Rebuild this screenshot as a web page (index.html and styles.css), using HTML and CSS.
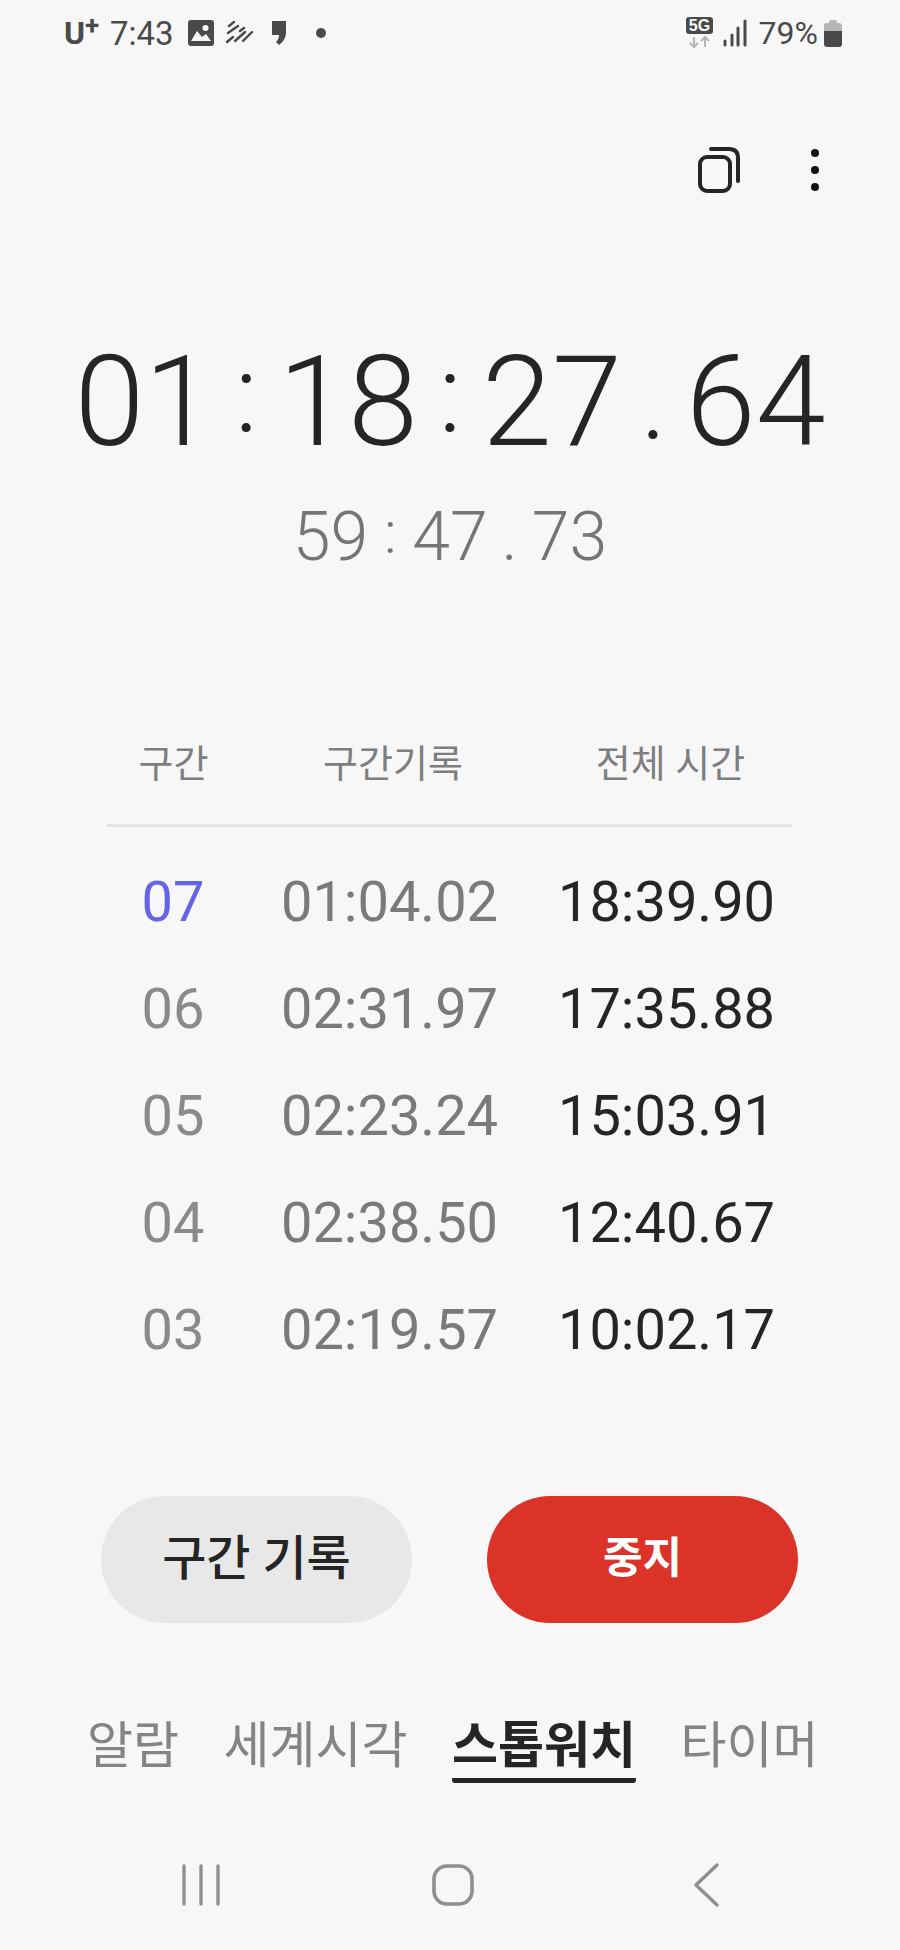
FILE: index.html
```html
<!DOCTYPE html>
<html lang="ko">
<head>
<meta charset="UTF-8">
<title>스톱워치</title>
<link rel="stylesheet" href="styles.css">
</head>
<body>
<div class="status">
	<div class="status-left">
		<span class="carrier">U<sup>+</sup></span>
		<span class="clock">7:43</span>
		<svg class="ico-img" width="26" height="26" viewBox="0 0 26 26"><rect width="26" height="26" rx="3" fill="#4a4a4a"/><circle cx="17.5" cy="8" r="3" fill="#f7f7f7"/><path d="M3 21 L9 11 L14 17 L18 14 L23 21 Z" fill="#f7f7f7"/></svg>
		<svg class="ico-dash" width="28" height="24" viewBox="0 0 28 24"><path d="M3 5 L8 1 M2 12 L12 5 M14 10 L18 7 M1 21 L7 16 M9 20 L19 11 M17 20 L26 11" stroke="#4a4a4a" stroke-width="2.4" stroke-linecap="round" fill="none"/></svg>
		<svg class="ico-comma" width="16" height="26" viewBox="0 0 16 26"><path d="M1 1 H15 V13 C15 18 11 23 8 25 L5 22 C7 20 8 18 8 15 H1 Z" fill="#4a4a4a"/></svg>
		<span class="dot"></span>
	</div>
	<div class="status-right">
		<svg width="28" height="32" viewBox="0 0 28 32"><rect width="27" height="17" rx="3" fill="#4a4a4a"/><text x="13.5" y="14" class="ico-5g">5G</text><path d="M8 20 V30 M4 26 L8 30 L12 26 M19 30 V20 M15 24 L19 20 L23 24" stroke="#b5b5b5" stroke-width="2" fill="none"/></svg>
		<svg class="ico-signal" width="24" height="28" viewBox="0 0 24 28"><path d="M2 22 V26 M9 16 V26 M15 9 V26 M22 2 V26" stroke="#4a4a4a" stroke-width="3" stroke-linecap="round"/></svg>
		<span class="pct">79%</span>
		<svg width="18" height="28" viewBox="0 0 18 28"><path d="M5 3 Q5 1 7 1 H11 Q13 1 13 3 V4 H15 Q18 4 18 7 V12 H0 V7 Q0 4 3 4 H5 Z" fill="#b5b5b5"/><path d="M0 12 H18 V25 Q18 28 15 28 H3 Q0 28 0 25 Z" fill="#4a4a4a"/></svg>
	</div>
</div>

<div class="toolbar">
	<svg width="42" height="46" viewBox="0 0 42 46"><rect x="2" y="10" width="30" height="34" rx="7" fill="none" stroke="#252525" stroke-width="4"/><path d="M13 2 H31 Q40 2 40 11 V34" fill="none" stroke="#252525" stroke-width="4" stroke-linecap="round"/></svg>
	<div class="more"><i></i><i></i><i></i></div>
</div>

<div class="timer">
	<span>01</span><span class="sep colon">:</span><span>18</span><span class="sep colon">:</span><span>27</span><span class="sep">.</span><span>64</span>
</div>
<div class="subtimer">
	<span>59</span><span class="sep colon">:</span><span>47</span><span class="sep">.</span><span>73</span>
</div>

<div class="laps">
	<div class="lap-head">
		<div>구간</div><div>구간기록</div><div>전체 시간</div>
	</div>
	<div class="lap-row current"><div class="n">07</div><div class="d">01:04.02</div><div class="t">18:39.90</div></div>
	<div class="lap-row"><div class="n">06</div><div class="d">02:31.97</div><div class="t">17:35.88</div></div>
	<div class="lap-row"><div class="n">05</div><div class="d">02:23.24</div><div class="t">15:03.91</div></div>
	<div class="lap-row"><div class="n">04</div><div class="d">02:38.50</div><div class="t">12:40.67</div></div>
	<div class="lap-row"><div class="n">03</div><div class="d">02:19.57</div><div class="t">10:02.17</div></div>
</div>

<div class="buttons">
	<div class="btn btn-lap">구간 기록</div>
	<div class="btn btn-stop">중지</div>
</div>

<div class="tabs">
	<div class="tab">알람</div>
	<div class="tab">세계시각</div>
	<div class="tab active">스톱워치</div>
	<div class="tab">타이머</div>
</div>

<div class="navbar">
	<svg width="42" height="42" viewBox="0 0 42 42"><path d="M4 2 V40 M21 2 V40 M38 2 V40" stroke="#8f8f8f" stroke-width="3.4" stroke-linecap="round"/></svg>
	<svg class="nav-home" width="42" height="42" viewBox="0 0 42 42"><rect x="2" y="2" width="38" height="38" rx="13" fill="none" stroke="#8f8f8f" stroke-width="3.6"/></svg>
	<svg width="26" height="44" viewBox="0 0 26 44"><path d="M23 2 L2 22 L23 42" fill="none" stroke="#8f8f8f" stroke-width="3.4" stroke-linecap="round" stroke-linejoin="round"/></svg>
</div>
</body>
</html>
```

FILE: styles.css
```css
html, body
{	margin:0;
	padding:0;
	background:#f7f7f7;
	font-family:Roboto, "Noto Sans CJK KR", sans-serif;
}
body
{	width:900px;
	height:1950px;
	overflow:hidden;
}

/* status bar */
.status
{	height:66px;
	display:flex;
	justify-content:space-between;
	align-items:center;
	padding:0 58px 0 64px;
	color:#4a4a4a;
}
.status-left, .status-right
{	display:flex;
	align-items:center;
}
.carrier
{	font-size:32px;
	font-weight:700;
	line-height:34px;
	width:37px;
}
.carrier sup
{	font-size:26px;
	line-height:0;
	vertical-align:10px;
}
.clock
{	font-size:33px;
	margin-left:9px;
	width:78px;
}
.ico-dash
{	margin-left:12px;
}
.ico-comma
{	margin-left:17px;
}
.dot
{	width:10px;
	height:10px;
	border-radius:50%;
	background:#4a4a4a;
	margin-left:29px;
}
.ico-5g
{	font-family:"Liberation Sans", sans-serif;
	font-size:16px;
	font-weight:700;
	fill:#f7f7f7;
	text-anchor:middle;
}
.ico-signal
{	margin-left:9px;
}
.pct
{	font-size:32px;
	margin-left:12px;
	margin-right:6px;
}

/* toolbar */
.toolbar
{	height:46px;
	margin-top:81px;
	padding:0 81px 0 698px;
	display:flex;
	justify-content:space-between;
	align-items:center;
}
.more
{	display:flex;
	flex-direction:column;
	gap:9px;
}
.more i
{	display:block;
	width:8px;
	height:8px;
	border-radius:50%;
	background:#111;
}

/* timer */
.timer
{	margin-top:139px;
	height:140px;
	line-height:140px;
	display:flex;
	justify-content:center;
	font-size:126px;
	font-weight:300;
	color:#252525;
}
.timer .sep
{	width:64px;
	text-align:center;
	font-size:110px;
}
.timer .colon
{	line-height:125px;
}
.subtimer
{	margin-top:30px;
	height:70px;
	line-height:70px;
	display:flex;
	justify-content:center;
	font-size:68px;
	font-weight:300;
	color:#757575;
}
.subtimer .sep
{	width:44px;
	text-align:center;
}
.subtimer .colon
{	font-size:60px;
	line-height:62px;
}

/* lap table */
.laps
{	margin:162px 108px 0 107px;
}
.lap-head
{	display:grid;
	grid-template-columns:133px 306px 249px;
	height:90px;
	line-height:60px;
	font-size:38px;
	text-align:center;
	color:#7e7e7e;
	border-bottom:3px solid #e3e3e3;
	margin-bottom:22px;
}
.lap-row
{	display:grid;
	grid-template-columns:132px 301px 253px;
	height:107px;
	line-height:107px;
	font-size:56px;
	text-align:center;
}
.lap-row .n
{	color:#8a8a8a;
}
.lap-row .d
{	color:#7a7a7a;
}
.lap-row .t
{	color:#252525;
}
.lap-row.current .n
{	color:#6464e6;
}

/* buttons */
.buttons
{	margin-top:112px;
	padding:0 102px 0 101px;
	display:flex;
	justify-content:space-between;
}
.btn
{	width:311px;
	height:127px;
	border-radius:64px;
	text-align:center;
	line-height:125px;
	font-size:43px;
	font-weight:700;
}
.btn-lap
{	background:#e8e8e8;
	color:#252525;
	font-size:48px;
	font-weight:500;
}
.btn-stop
{	background:#dc3329;
	color:#fff;
}

/* tabs */
.tabs
{	margin-top:90px;
	padding-left:87px;
	display:flex;
	height:70px;
	gap:44.5px;
}
.tab
{	font-size:50px;
	line-height:66px;
	color:#848484;
}
.tab.active
{	color:#252525;
	font-weight:700;
	border-bottom:5px solid #252525;
	border-radius:3px;
	height:65px;
}

/* nav bar */
.navbar
{	margin-top:80px;
	padding:0 180px;
	display:flex;
	justify-content:space-between;
	align-items:center;
}
.nav-home
{	margin-right:10px;
}
```
